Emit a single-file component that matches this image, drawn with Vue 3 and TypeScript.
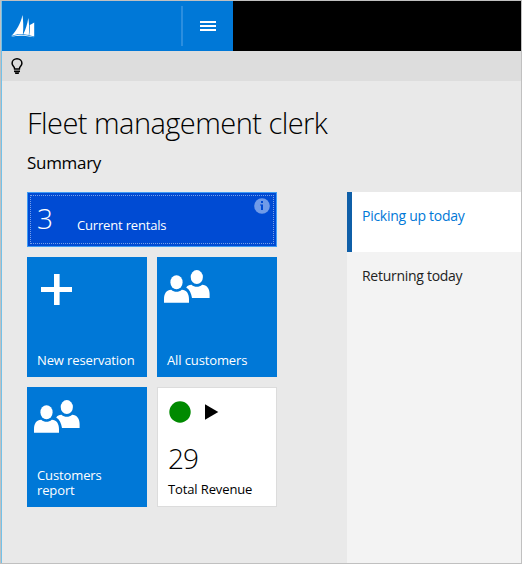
<script setup lang="ts">
import { ref } from 'vue'

interface Tile {
  id: string
  label: string
  icon: 'plus' | 'people'
}

const tiles: Tile[] = [
  { id: 'new', label: 'New reservation', icon: 'plus' },
  { id: 'all', label: 'All customers', icon: 'people' },
  { id: 'report', label: 'Customers report', icon: 'people' },
]

const tabs: string[] = ['Picking up today', 'Returning today']
const activeTab = ref(tabs[0])
</script>

<template>
  <div class="window">
    <header class="navbar">
      <div class="brand">
        <svg class="logo" width="24" height="24" viewBox="0 0 24 24">
          <path d="M11.5 0C9.6 8.5 5.5 15.8 0.3 20.9C3.7 19.4 7.8 18.9 11.9 19.3C12.6 12 12.2 5.5 11.5 0Z" />
          <path d="M17.3 3.1C16.4 9.4 14.5 15 12.3 19.3L17.8 20.1C18.5 14 18.1 7.8 17.3 3.1Z" />
          <path d="M23.2 7.4C21.4 8.4 20 9.2 18.8 10C19 13.8 18.8 17.2 18.2 20.2L23.2 21.4Z" />
          <path d="M0 21.8C7.5 18.7 15.6 19.5 23.2 22.3C14.8 20.5 7.5 20.2 0 21.8Z" />
        </svg>
      </div>
      <button class="menu" aria-label="Menu"><i></i><i></i><i></i></button>
    </header>
    <div class="toolbar">
      <svg class="bulb" width="12" height="17" viewBox="0 0 12 17">
        <path d="M3.6 10.9C3.6 8.4 1.1 8.2 1.1 5.3a4.9 4.5 0 0 1 9.8 0C10.9 8.2 8.4 8.4 8.4 10.9Z" fill="none" stroke="#000" stroke-width="1.5" />
        <path d="M3 12.5H9V14H3ZM3.6 14.3H8.4L7.6 16H4.4Z" />
      </svg>
    </div>
    <div class="body">
      <main class="main">
        <h1>Fleet management clerk</h1>
        <h2>Summary</h2>
        <div class="tiles">
          <section class="tile wide">
            <div class="focus">
              <span class="count">3</span>
              <span class="caption">Current rentals</span>
              <svg class="info" width="16" height="16" viewBox="0 0 16 16">
                <circle cx="8" cy="8" r="7.8" fill="#709be8" />
                <path d="M7 3H9V5H7ZM6 6.5H9V12H7V7.5H6Z" fill="#004bd3" />
              </svg>
            </div>
          </section>
          <section v-for="tile in tiles" :key="tile.id" class="tile">
            <svg v-if="tile.icon === 'plus'" class="plus-icon" width="31" height="31" viewBox="0 0 31 31">
              <path d="M13 0H18.6V13H31V18H18.6V31H13V18H0V13H13Z" />
            </svg>
            <svg v-else class="people-icon" width="46" height="33" viewBox="0 0 46 33">
              <ellipse cx="12.5" cy="12.2" rx="6.1" ry="7" />
              <path d="M0 32.7V29C0 23.5 2.6 20 7.2 19.8C10.3 22.5 14.7 22.5 17.8 19.8C22.4 20 25 23.5 25 29V32.7Z" />
              <ellipse cx="32.8" cy="7.1" rx="6.1" ry="7" />
              <path d="M22.2 17.4C23.3 15.6 25.2 14.8 27.5 14.8C30.6 17.5 35 17.5 38.1 14.8C42.9 15.1 45.6 18.5 45.6 24V27.9H28C27.3 23.3 25.6 19.4 22.2 17.4Z" />
            </svg>
            <span class="label">{{ tile.label }}</span>
          </section>
          <section class="tile revenue">
            <div class="status">
              <svg width="50" height="22" viewBox="0 0 50 22">
                <circle cx="11" cy="11" r="10.7" fill="#008a00" />
                <path d="M36 3.3L49.3 11L36 18.7Z" />
              </svg>
            </div>
            <span class="amount">29</span>
            <span class="label">Total Revenue</span>
          </section>
        </div>
      </main>
      <nav class="side">
        <a v-for="tab in tabs" :key="tab" class="tab" :class="{ active: tab === activeTab }" @click="activeTab = tab">{{ tab }}</a>
      </nav>
    </div>
  </div>
</template>

<style>
body {
  margin: 0;
  overflow: hidden;
}
</style>

<style scoped>
* {
  box-sizing: border-box;
}
.window {
  width: 522px;
  height: 564px;
  display: flex;
  flex-direction: column;
  border: 1px solid #c0c0c0;
  background: #e9e9e9;
  font-family: "Open Sans", "Noto Sans", sans-serif;
  font-size: 14px;
  color: #000;
}
svg {
  display: block;
}
.navbar {
  height: 50px;
  flex: none;
  display: flex;
  align-items: center;
  background: #000;
  box-shadow: inset 1px 0 #73c1e8;
  padding-left: 1px;
}
.brand {
  width: 179px;
  height: 50px;
  background: #0078d7;
  padding: 14px 0 0 9px;
}
.logo {
  fill: #fff;
}
.menu {
  width: 52px;
  height: 50px;
  border: 0;
  background: linear-gradient(#2b8edf, #2b8edf) 0 5px / 2px 40px no-repeat #0078d7;
  padding: 20px 0 0 19px;
  display: flex;
  flex-direction: column;
  justify-content: flex-start;
  gap: 2px;
}
.menu i {
  width: 16px;
  height: 2px;
  background: #fff;
}
.toolbar {
  height: 30px;
  flex: none;
  background: #ddd;
  border-left: 1px solid #73c1e8;
  padding: 7px 0 0 9px;
}
.body {
  flex: 1;
  display: flex;
  border-left: 1px solid #73c1e8;
}
.main {
  width: 345px;
  padding: 21px 0 0 25px;
}
h1 {
  margin: 0;
  font-size: 29px;
  line-height: 42px;
  font-weight: 300;
  letter-spacing: -0.54px;
  white-space: nowrap;
}
h2 {
  margin: 8px 0 0;
  font-size: 17px;
  line-height: 22px;
  font-weight: 400;
  letter-spacing: -0.3px;
}
.tiles {
  margin-top: 18px;
  display: grid;
  grid-template-columns: 120px 120px;
  grid-template-rows: 55px 120px 120px;
  gap: 10px;
}
.tile {
  display: flex;
  flex-direction: column;
  align-items: flex-start;
  background: #0078d7;
  color: #fff;
}
.tile svg {
  fill: #fff;
}
.wide {
  grid-column: span 2;
  background: #004bd3;
  border: 1px solid #3d9bf5;
  padding: 2px;
}
.focus {
  width: 100%;
  height: 49px;
  border: 1px dotted #769fe8;
  display: flex;
  align-items: flex-start;
  padding-left: 6px;
}
.count {
  width: 40px;
  font-size: 28px;
  line-height: 40px;
  font-weight: 300;
  margin-top: 2px;
}
.caption {
  line-height: 18px;
  margin-top: 20px;
  font-size: 13px;
  letter-spacing: -0.18px;
}
.info {
  margin: 2px 3px 0 auto;
}
.label {
  margin-top: auto;
  padding: 0 10px 9px;
  font-size: 13px;
  line-height: 15px;
  letter-spacing: -0.12px;
}
.plus-icon {
  margin: 17px 0 0 14px;
}
.people-icon {
  margin: 13px 0 0 7px;
}
.revenue {
  background: #fff;
  border: 1px solid #dcdcdc;
  color: #000;
}
.status {
  padding: 13px 0 0 11px;
}
.revenue svg {
  fill: #000;
}
.amount {
  margin: 15px 0 0 10px;
  font-size: 28px;
  font-weight: 300;
  line-height: 40px;
  letter-spacing: -1px;
}
.side {
  flex: 1;
  margin-top: 111px;
  background: #f3f3f3;
}
.tab {
  height: 60px;
  display: flex;
  padding: 15px 0 0 10px;
  line-height: 18px;
  border-left: 5px solid transparent;
  color: #222;
  font-size: 14px;
  letter-spacing: -0.28px;
  white-space: nowrap;
}
.tab.active {
  background: #fff;
  border-left-color: #0f5fa8;
  color: #0078d7;
}
</style>
